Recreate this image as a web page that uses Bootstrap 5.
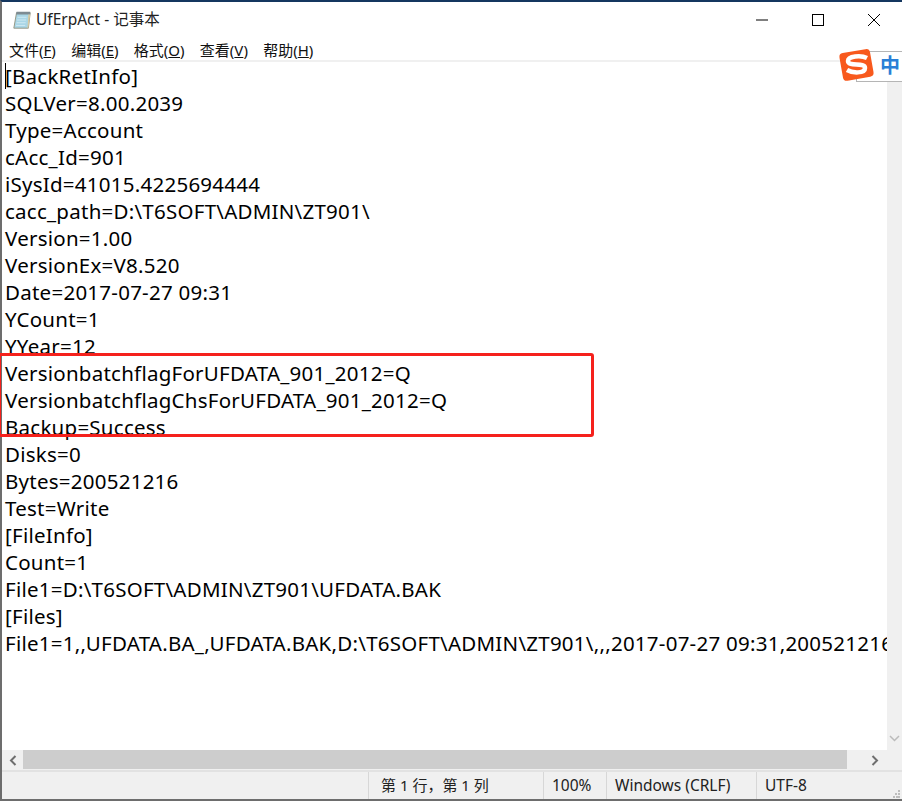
<!DOCTYPE html>
<html lang="zh">
<head>
<meta charset="utf-8">
<title>UfErpAct - 记事本</title>
<link rel="stylesheet" href="https://cdn.jsdelivr.net/npm/bootstrap@5.3.0/dist/css/bootstrap.min.css">
<style>
html,body{height:802px;overflow:hidden;background:#fff}
body{font-family:"Noto Sans","Noto Sans CJK SC",sans-serif;color:#000}
.np-win{width:902px;height:801px;border-top:2px solid #14365f;border-left:2px solid #6d6d6d;border-bottom:2px solid #6d6d6d;position:relative;background:#fff}
.np-title{height:35px;font-size:15.500px;padding-left:10px;gap:4px;color:#222}
.np-ctrl{margin-left:auto}
.np-ctrl span{width:56px;height:35px;display:flex;align-items:center;justify-content:center}
.np-menu{height:25px;font-size:15px;padding:4px 0 0 7px;gap:15.300px;color:#111;border-bottom:2px solid #f0f0f0}
.np-menu u{text-underline-offset:1px}
.np-body{height:688px;min-height:0}
.np-text{font-size:20.500px;letter-spacing:.25px;line-height:27px;padding:1px 0 0 3px;white-space:pre;overflow:hidden;flex:1 1 0;min-width:0;position:relative}
.np-caret{position:absolute;left:3px;top:1px;width:1px;height:26px;background:#000}
.np-vbar{width:15px;background:#f0f0f0;margin-top:19px}
.np-hbar{height:20px;background:#f0f0f0}
.np-hbtn{width:21px}
.np-hbtn-end{width:55px}
.np-thumb{background:#cdcdcd;height:19px;flex:1 1 0}
.np-status{height:29px;background:#f0f0f0;border-top:2px solid #e2e2e2;font-size:15.500px;color:#222}
.np-cell{height:100%;border-left:1px solid #d7d7d7;padding-left:8px;display:flex;align-items:center}
.np-cell-first{width:175px;padding-left:12px;font-size:15px}
.np-cell-zoom{width:63px}
.np-cell-eol{width:150px}
.np-cell-enc{width:146px}
.np-redbox{position:absolute;left:-2px;top:353px;width:596px;height:84px;border:3px solid #f5211c;border-radius:3px}
.np-ime{position:absolute;left:836px;top:46px;width:66px;height:38px}
.np-ime-tab{position:absolute;left:20px;top:5px;right:0;height:31px;background:#fff;border:1px solid #b5b5b5;border-right:0;color:#2a7fd6;font-size:20px;font-weight:700;line-height:28px;padding-left:23px}
.np-grip{position:absolute;right:1px;bottom:1px}
</style>
</head>
<body class="m-0">
<div class="np-win d-flex flex-column">
  <div class="np-title d-flex align-items-center">
    <svg width="20" height="22" viewBox="0 0 22 22"><path d="M5 3h15l-2 17H2z" fill="#a9d6e6" stroke="#8f8f7a"/><path d="M5 2h15v3H4.500z" fill="#7d8b92"/><path d="M18 5h2l-2 15h-1z" fill="#d8c9a0"/><path d="M6 8h10M5.500 11h10M5 14h10M4.500 17h10" stroke="#d2eaf3"/></svg>
    <span>UfErpAct - 记事本</span>
    <div class="np-ctrl d-flex">
      <span><svg width="12" height="12" viewBox="0 0 12 12"><path d="M0 6h12" stroke="#000"/></svg></span>
      <span><svg width="12" height="12" viewBox="0 0 12 12"><rect x=".5" y=".5" width="11" height="11" fill="none" stroke="#000"/></svg></span>
      <span><svg width="12" height="12" viewBox="0 0 12 12"><path d="M0 0l12 12M12 0L0 12" stroke="#000"/></svg></span>
    </div>
  </div>
  <div class="np-menu d-flex align-items-center">
    <span>文件(<u>F</u>)</span><span>编辑(<u>E</u>)</span><span>格式(<u>O</u>)</span><span>查看(<u>V</u>)</span><span>帮助(<u>H</u>)</span>
  </div>
  <div class="np-body d-flex">
    <div class="np-text"><span class="np-caret"></span>[BackRetInfo]
SQLVer=8.00.2039
Type=Account
cAcc_Id=901
iSysId=41015.4225694444
cacc_path=D:\T6SOFT\ADMIN\ZT901\
Version=1.00
VersionEx=V8.520
Date=2017-07-27 09:31
YCount=1
YYear=12
VersionbatchflagForUFDATA_901_2012=Q
VersionbatchflagChsForUFDATA_901_2012=Q
Backup=Success
Disks=0
Bytes=200521216
Test=Write
[FileInfo]
Count=1
File1=D:\T6SOFT\ADMIN\ZT901\UFDATA.BAK
[Files]
File1=1,,UFDATA.BA_,UFDATA.BAK,D:\T6SOFT\ADMIN\ZT901\,,,2017-07-27 09:31,200521216</div>
    <div class="np-vbar d-flex flex-column justify-content-end align-items-center pb-2">
      <svg width="11" height="7" viewBox="0 0 11 7"><path d="M1 1l4.500 4.500L10 1" fill="none" stroke="#bbb" stroke-width="1.500"/></svg>
    </div>
  </div>
  <div class="np-hbar d-flex align-items-start">
    <div class="np-hbtn d-flex justify-content-center align-items-center h-100"><svg width="8" height="11" viewBox="0 0 8 11"><path d="M6.500 1L2 5.500 6.500 10" fill="none" stroke="#6e6e6e" stroke-width="2"/></svg></div>
    <div class="np-thumb"></div>
    <div class="np-hbtn-end d-flex justify-content-center align-items-center h-100"><svg width="8" height="11" viewBox="0 0 8 11"><path d="M1.500 1L6 5.500 1.500 10" fill="none" stroke="#6e6e6e" stroke-width="2"/></svg></div>
  </div>
  <div class="np-status d-flex align-items-center">
    <div class="flex-grow-1"></div>
    <div class="np-cell np-cell-first">第 1 行，第 1 列</div>
    <div class="np-cell np-cell-zoom">100%</div>
    <div class="np-cell np-cell-eol">Windows (CRLF)</div>
    <div class="np-cell np-cell-enc">UTF-8</div>
  </div>
  <svg class="np-grip" width="8" height="8" viewBox="0 0 8 8"><path d="M5 0h2v2H5zM2 3h2v2H2zM5 3h2v2H5zM0 6h2v2H0zM3 6h2v2H3zM5 6h2v2H5z" fill="#bdbdbd"/></svg>
</div>
<div class="np-redbox"></div>
<div class="np-ime">
  <div class="np-ime-tab">中</div>
  <svg class="position-absolute top-0 start-0" width="42" height="38" viewBox="0 0 42 38"><rect x="5" y="5" width="31" height="28" rx="4" fill="#f8591d" transform="rotate(-10 20 19)"/><path d="M31 12c-6-3-19-2-19 3 0 6 17 1 17 7 0 6-13 5-18 2" fill="none" stroke="#fff" stroke-width="4.500"/></svg>
</div>
</body>
</html>
